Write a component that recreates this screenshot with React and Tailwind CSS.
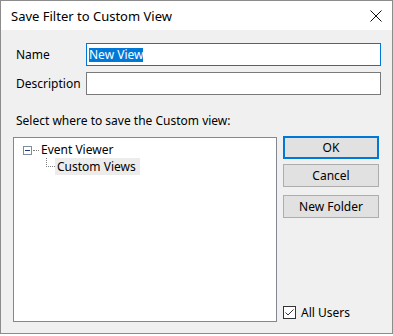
export default function App() {
    const font = { fontFamily: '"Noto Sans", "Open Sans", sans-serif' };

    return (
        <div className="w-[393px] h-[336px] bg-white text-[12px] text-black" style={font}>
            <div className="h-[334px] border border-[#8c8c8c] flex flex-col">
                {/* title bar */}
                <div className="h-[31px] bg-white flex items-center justify-between pl-[10px] pr-[9px]">
                    <span className="text-[13px] leading-none mt-[1px]">Save Filter to Custom View</span>
                    <svg width="12" height="12" viewBox="0 0 12 12" className="mr-[1px]">
                        <path d="M0.5 0.5 L11.5 11.5 M11.5 0.5 L0.5 11.5" stroke="#111" strokeWidth="1" />
                    </svg>
                </div>

                {/* body */}
                <div className="flex-1 bg-[#f0f0f0] flex flex-col pt-[13px] pl-[12px] pr-[11px] pb-[11px]">
                    <div className="flex items-center">
                        <span className="w-[73px] pl-[3px] leading-none">Name</span>
                        <div className="flex-1 h-[23px] bg-white border border-[#0078d7] flex items-center pl-[2px]">
                            <span className="bg-[#0078d7] text-white leading-[14px] h-[14px]">New View</span>
                        </div>
                    </div>
                    <div className="flex items-center mt-[6px]">
                        <span className="w-[73px] pl-[3px] leading-none">Description</span>
                        <div className="flex-1 h-[23px] bg-white border border-[#7a7a7a]"></div>
                    </div>

                    <div className="mt-[18px] pl-[3px] leading-[16px]">Select where to save the Custom view:</div>

                    <div className="flex mt-[8px] flex-1">
                        {/* tree */}
                        <div className="w-[264px] h-[185px] bg-white border border-[#828790] pt-[4px] pl-[9px]">
                            <div className="flex items-center h-[16px]">
                                <div className="w-[9px] h-[9px] border border-[#7f8c9c] flex items-center justify-center bg-white">
                                    <div className="w-[5px] h-px bg-[#1b3a8c]"></div>
                                </div>
                                <div className="w-[6px] border-t border-dotted border-[#808080] ml-[1px]"></div>
                                <span className="ml-[2px] leading-none">Event Viewer</span>
                            </div>
                            <div className="flex h-[17px] ml-[23px]">
                                <div className="w-[9px] h-[9px] border-l border-b border-dotted border-[#808080]"></div>
                                <span className="bg-[#ececec] pl-[2px] pr-[4px] leading-[17px]">Custom Views</span>
                            </div>
                        </div>

                        {/* buttons */}
                        <div className="flex flex-col ml-[6px] w-[96px]">
                            <button className="h-[23px] bg-[#e1e1e1] border-2 border-[#0078d7] leading-none -mt-px">OK</button>
                            <button className="h-[23px] bg-[#e1e1e1] border border-[#adadad] leading-none mt-[5px]">Cancel</button>
                            <button className="h-[23px] bg-[#e1e1e1] border border-[#adadad] leading-none mt-[8px]">New Folder</button>
                            <div className="flex-1"></div>
                            <div className="flex items-center mb-[3px]">
                                <div className="w-[13px] h-[13px] border border-[#333] bg-white flex items-center justify-center">
                                    <svg width="11" height="11" viewBox="0 0 11 11">
                                        <path d="M1.5 5.5 L4 8 L9.5 2.5" fill="none" stroke="#333" strokeWidth="1" />
                                    </svg>
                                </div>
                                <span className="ml-[5px] leading-none">All Users</span>
                            </div>
                        </div>
                    </div>
                </div>
            </div>
        </div>
    );
}
